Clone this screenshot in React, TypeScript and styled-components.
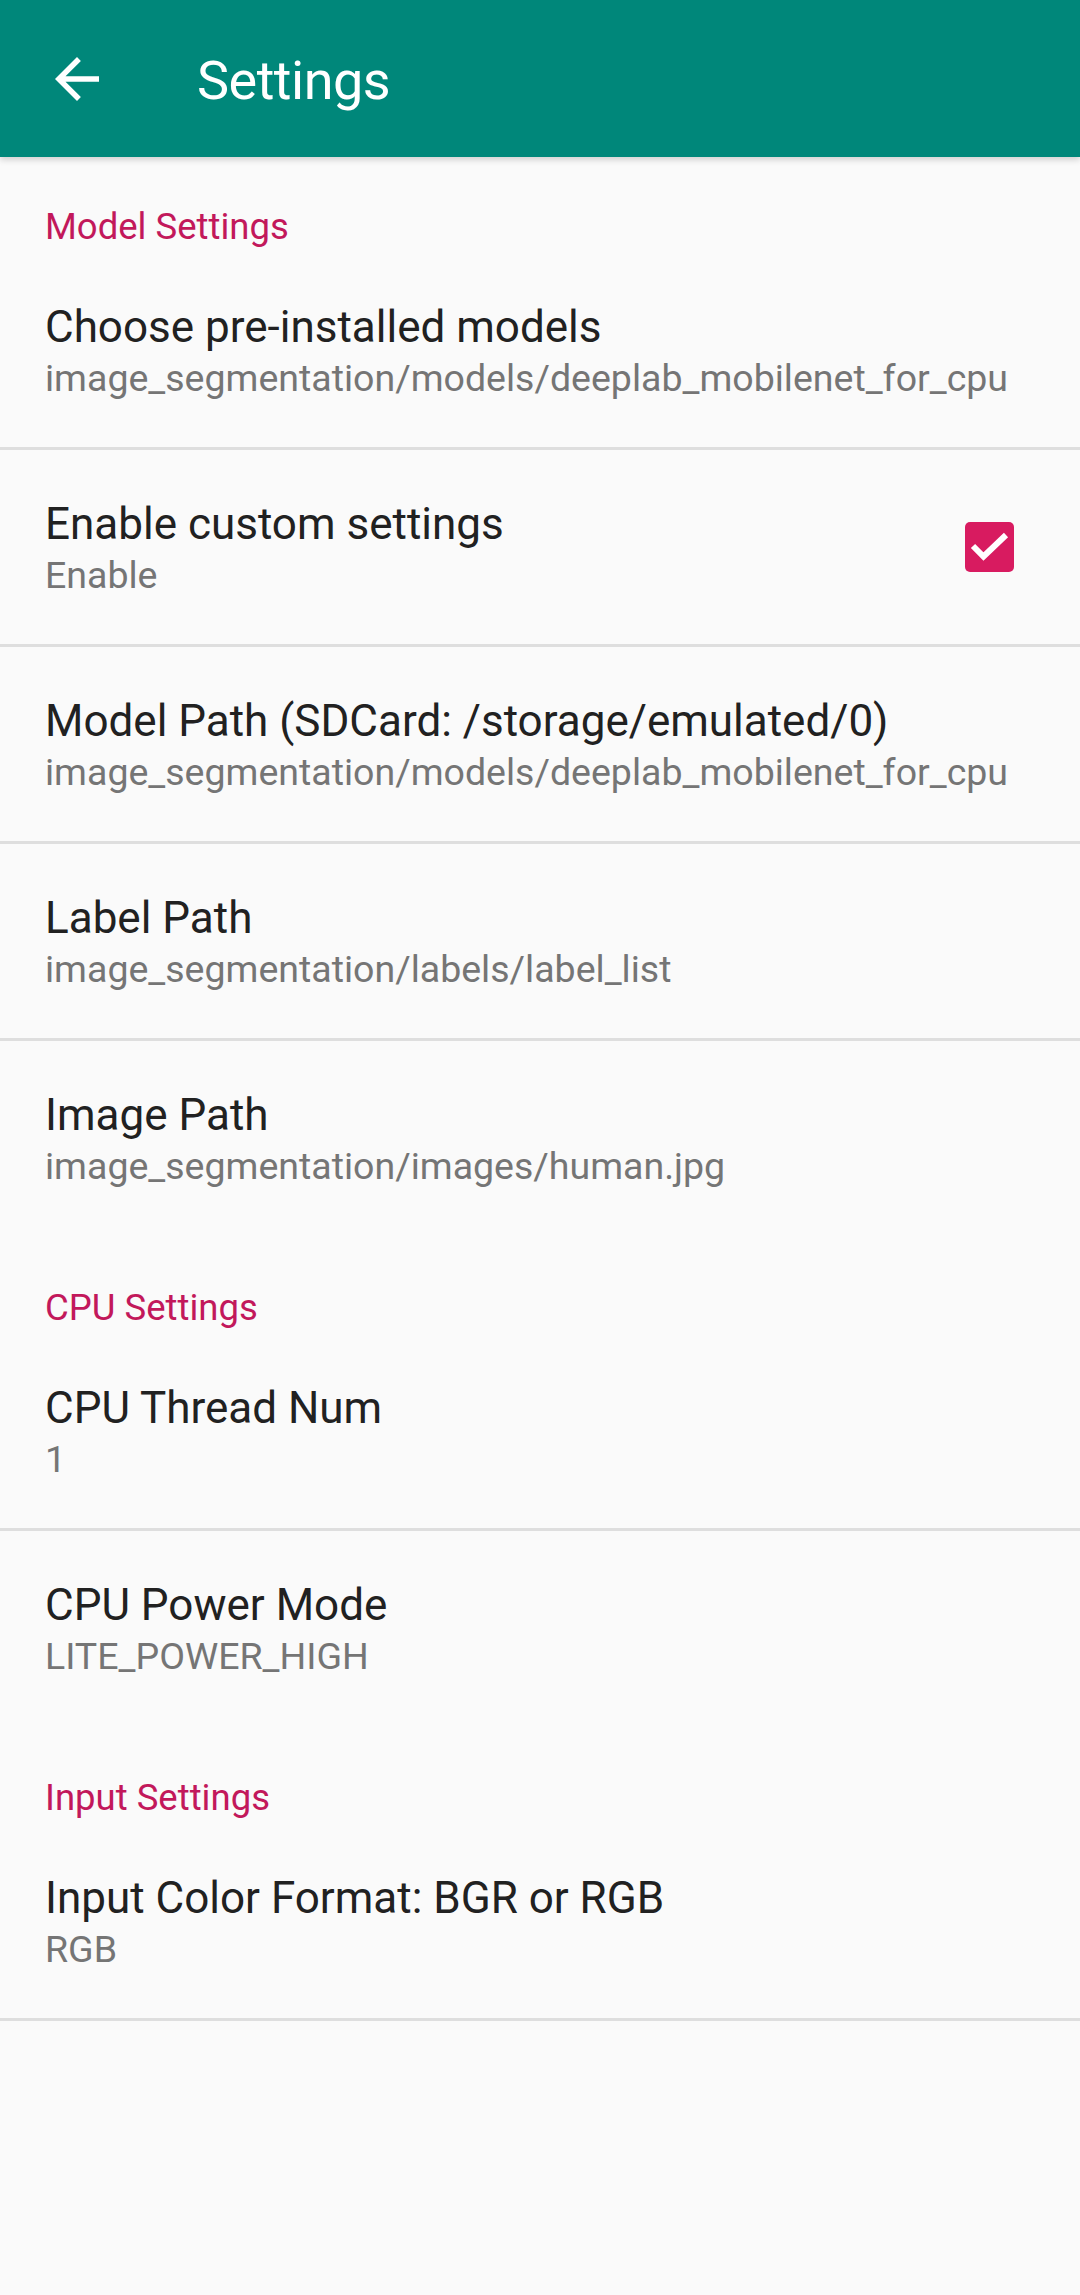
import styled, { createGlobalStyle } from "styled-components";

const GlobalStyle = createGlobalStyle`
  html, body {
    margin: 0;
    padding: 0;
    background: #fafafa;
  }
  body {
    font-family: Roboto, "Noto Sans", "Liberation Sans", sans-serif;
  }
`;

const Page = styled.div`
  width: 1080px;
  min-height: 2295px;
  background: #fafafa;
`;

const Toolbar = styled.header`
  height: 157px;
  background: #00877a;
  display: flex;
  align-items: center;
  box-shadow: 0 3px 6px rgba(0, 0, 0, 0.16);
  position: relative;
  z-index: 1;
`;

const BackButton = styled.button`
  width: 66px;
  height: 66px;
  margin-left: 44px;
  padding: 0;
  border: none;
  background: transparent;
  display: flex;
  align-items: center;
  justify-content: center;
  cursor: pointer;
`;

const ToolbarTitle = styled.h1`
  margin: 0 0 0 87px;
  padding-top: 4px;
  color: #ffffff;
  font-size: 54px;
  font-weight: 400;
  letter-spacing: -0.5px;
`;

const Category = styled.div`
  height: 96px;
  box-sizing: border-box;
  padding: 52px 0 0 45px;
  font-size: 36.5px;
  line-height: 36px;
  color: #c2185b;
`;

const Row = styled.div<{ $divider?: boolean }>`
  height: 197px;
  box-sizing: border-box;
  display: flex;
  padding: 49px 66px 0 45px;
  border-bottom: 3px solid ${(p) => (p.$divider ? "#dedede" : "transparent")};
`;

const TextCol = styled.div`
  flex: 1;
  display: flex;
  flex-direction: column;
`;

const Title = styled.span`
  font-size: 44px;
  line-height: 50px;
  color: #212121;
`;

const Summary = styled.span`
  margin-top: 2px;
  font-size: 37.5px;
  line-height: 49px;
  color: #757575;
  white-space: nowrap;
`;

const CheckBox = styled.div`
  align-self: center;
  margin-top: -49px;
  width: 49px;
  height: 50px;
  border-radius: 5px;
  background: #d81b60;
  display: flex;
  align-items: center;
  justify-content: center;
`;

const BackArrow = () => (
  <svg width="66" height="66" viewBox="0 0 24 24">
    <path
      fill="#ffffff"
      d="M20 11H7.83l5.59-5.59L12 4l-8 8 8 8 1.41-1.41L7.83 13H20v-2z"
    />
  </svg>
);

const CheckMark = () => (
  <svg width="49" height="50" viewBox="0 0 49 50">
    <path
      d="M8 24 L18.5 34.5 L41 13"
      fill="none"
      stroke="#ffffff"
      strokeWidth="6"
    />
  </svg>
);

type Item = {
  title: string;
  summary: string;
  divider?: boolean;
  checked?: boolean;
};

const modelItems: Item[] = [
  {
    title: "Choose pre-installed models",
    summary: "image_segmentation/models/deeplab_mobilenet_for_cpu",
    divider: true,
  },
  { title: "Enable custom settings", summary: "Enable", divider: true, checked: true },
  {
    title: "Model Path (SDCard: /storage/emulated/0)",
    summary: "image_segmentation/models/deeplab_mobilenet_for_cpu",
    divider: true,
  },
  { title: "Label Path", summary: "image_segmentation/labels/label_list", divider: true },
  { title: "Image Path", summary: "image_segmentation/images/human.jpg" },
];

const cpuItems: Item[] = [
  { title: "CPU Thread Num", summary: "1", divider: true },
  { title: "CPU Power Mode", summary: "LITE_POWER_HIGH" },
];

const inputItems: Item[] = [
  { title: "Input Color Format: BGR or RGB", summary: "RGB", divider: true },
];

const Pref = ({ item }: { item: Item }) => (
  <Row $divider={item.divider}>
    <TextCol>
      <Title>{item.title}</Title>
      <Summary>{item.summary}</Summary>
    </TextCol>
    {item.checked && (
      <CheckBox>
        <CheckMark />
      </CheckBox>
    )}
  </Row>
);

export default function App() {
  return (
    <Page>
      <GlobalStyle />
      <Toolbar>
        <BackButton aria-label="Back">
          <BackArrow />
        </BackButton>
        <ToolbarTitle>Settings</ToolbarTitle>
      </Toolbar>

      <Category>Model Settings</Category>
      {modelItems.map((it) => (
        <Pref key={it.title} item={it} />
      ))}

      <Category>CPU Settings</Category>
      {cpuItems.map((it) => (
        <Pref key={it.title} item={it} />
      ))}

      <Category>Input Settings</Category>
      {inputItems.map((it) => (
        <Pref key={it.title} item={it} />
      ))}
    </Page>
  );
}
